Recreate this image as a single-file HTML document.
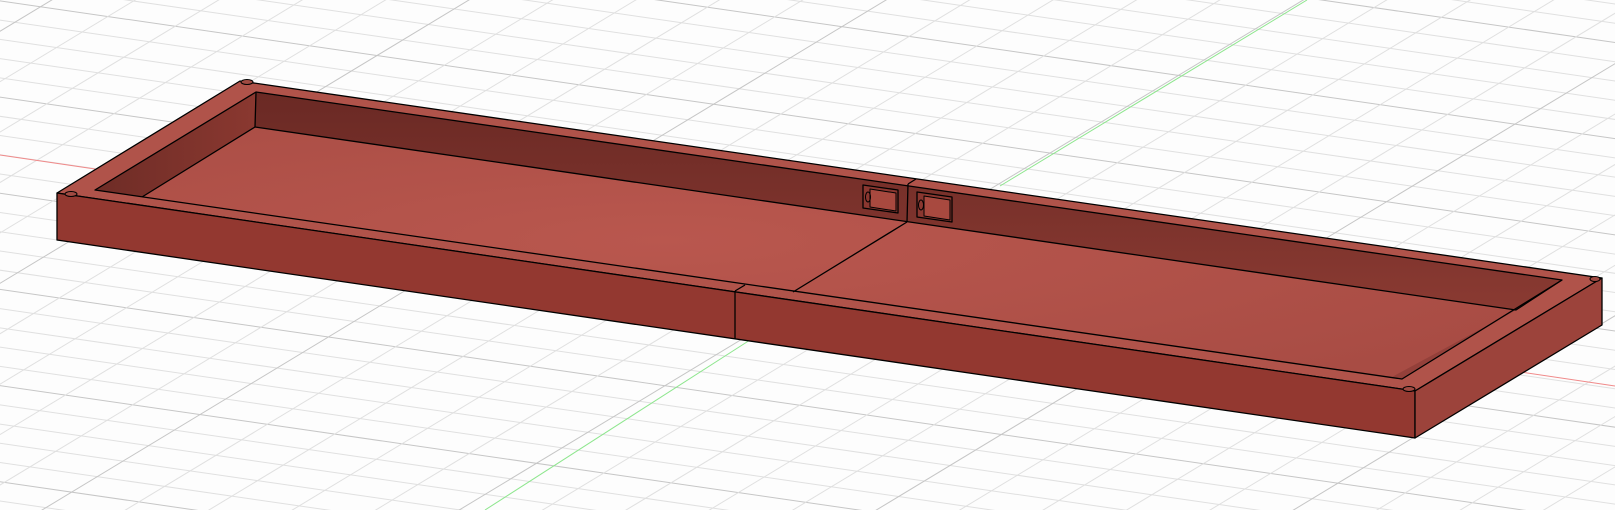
<!DOCTYPE html>
<html><head><meta charset="utf-8"><style>
html,body{margin:0;padding:0;background:#fdfdfd;overflow:hidden;width:1615px;height:510px}
svg{display:block;overflow:hidden}
</style></head><body>
<svg id="s" width="1615" height="510" viewBox="0 0 1615 510" xmlns="http://www.w3.org/2000/svg">
<defs>
<clipPath id="cp"><rect x="0" y="0" width="1615" height="510"/></clipPath>
<radialGradient id="floor" cx="0.4" cy="0.45" r="0.7">
<stop offset="0" stop-color="#b9574e"/><stop offset="1" stop-color="#a84c44"/></radialGradient>
<linearGradient id="bw" x1="0" y1="0" x2="0" y2="1">
<stop offset="0" stop-color="#6a2924"/><stop offset="1" stop-color="#8a3a32"/></linearGradient>
<linearGradient id="lw" x1="0" y1="0" x2="1" y2="0">
<stop offset="0" stop-color="#6e2c26"/><stop offset="1" stop-color="#8a3830"/></linearGradient>
</defs>
<g clip-path="url(#cp)">
<g id="grid"></g>
<line x1="0" y1="155" x2="95" y2="169" stroke="#f08a8a" stroke-width="1"/>
<line x1="1440" y1="360" x2="1615" y2="386" stroke="#f08a8a" stroke-width="1"/>
<line x1="1307" y1="0" x2="1000" y2="186" stroke="#8ee68e" stroke-width="1"/>
<line x1="750" y1="340" x2="485" y2="510" stroke="#8ee68e" stroke-width="1"/>
<g stroke="#000" stroke-width="1.3" stroke-linejoin="round">
<polygon points="240,81 57,193 1415,391 1602,278" fill="#b0534a"/>
<polygon points="256,92 95,190 1402,379 1562,280" fill="#7a302a" stroke="none"/>
<polygon points="256,92 1562,280 1516,310 255,127" fill="url(#bw)" stroke="none"/>
<polygon points="256,92 255,127 142,197 95,190" fill="url(#lw)" stroke="none"/>
<polygon points="255,127 1516,310 1402,379 95,190 142,197" fill="url(#floor)" stroke="none"/>
<polygon points="1562,280 1402,379 1392,377 1516,310" fill="#94403a" stroke="none"/>
<polygon points="256,92 95,190 1402,379 1562,280" fill="none"/>
<polyline points="256,92 255,127 1516,310 1562,280" fill="none"/>
<line x1="255" y1="127" x2="142" y2="197"/>
<polygon points="57,193 1415,391 1415,438 57,240" fill="#933830"/>
<polygon points="1415,391 1602,278 1602,325 1415,438" fill="#9c433b"/>
<line x1="735" y1="291" x2="735" y2="339"/>
<line x1="735" y1="291" x2="745" y2="285"/>
<line x1="793" y1="292" x2="907" y2="222"/>
<line x1="907" y1="222" x2="908" y2="184"/>
<line x1="908" y1="184" x2="916" y2="179"/>
<polygon points="863,185 898,190 898,213 863,208" fill="#8a3730"/>
<polygon points="870,189 896,193 896,211 870,207" fill="#a8493f" stroke-width="1"/>
<ellipse cx="868" cy="197" rx="2.5" ry="5" fill="none" stroke-width="1"/>
<polygon points="917,192 952,197 952,222 917,217" fill="#8a3730"/>
<polygon points="924,196 950,200 950,220 924,216" fill="#a8493f" stroke-width="1"/>
<ellipse cx="921" cy="205" rx="2.5" ry="5" fill="none" stroke-width="1"/>
<ellipse cx="71" cy="194" rx="6" ry="2.5" fill="#a04a42" stroke-width="1"/>
<ellipse cx="247" cy="82" rx="6" ry="2.5" fill="#a04a42" stroke-width="1"/>
<ellipse cx="1409" cy="389" rx="6" ry="2.5" fill="#a04a42" stroke-width="1"/>
<ellipse cx="1595" cy="279" rx="5" ry="2.5" fill="#a04a42" stroke-width="1"/>
</g>
</g>
</svg>
<script>
(function(){
var g=document.getElementById('grid'),ns='http://www.w3.org/2000/svg';
var O=[1050,153];
var u=[1360,197],lu=Math.hypot(u[0],u[1]);u=[u[0]/lu,u[1]/lu];
var v=[-187,113],lv=Math.hypot(v[0],v[1]);v=[v[0]/lv,v[1]/lv];
function L(p,d,c){var l=document.createElementNS(ns,'line');
l.setAttribute('x1',p[0]-d[0]*3000);l.setAttribute('y1',p[1]-d[1]*3000);
l.setAttribute('x2',p[0]+d[0]*3000);l.setAttribute('y2',p[1]+d[1]*3000);
l.setAttribute('stroke',c);l.setAttribute('stroke-width','1');g.appendChild(l);}
var sv=30,su=68;
for(var i=-50;i<=50;i++){var p=[O[0]+v[0]*sv*i,O[1]+v[1]*sv*i];L(p,u,i%5==0?'#c6c6c6':'#e0e0e0');}
for(var j=-50;j<=50;j++){var p=[O[0]+u[0]*su*j,O[1]+u[1]*su*j];L(p,v,j%5==0?'#c6c6c6':'#e0e0e0');}
})();
</script>
</body></html>
